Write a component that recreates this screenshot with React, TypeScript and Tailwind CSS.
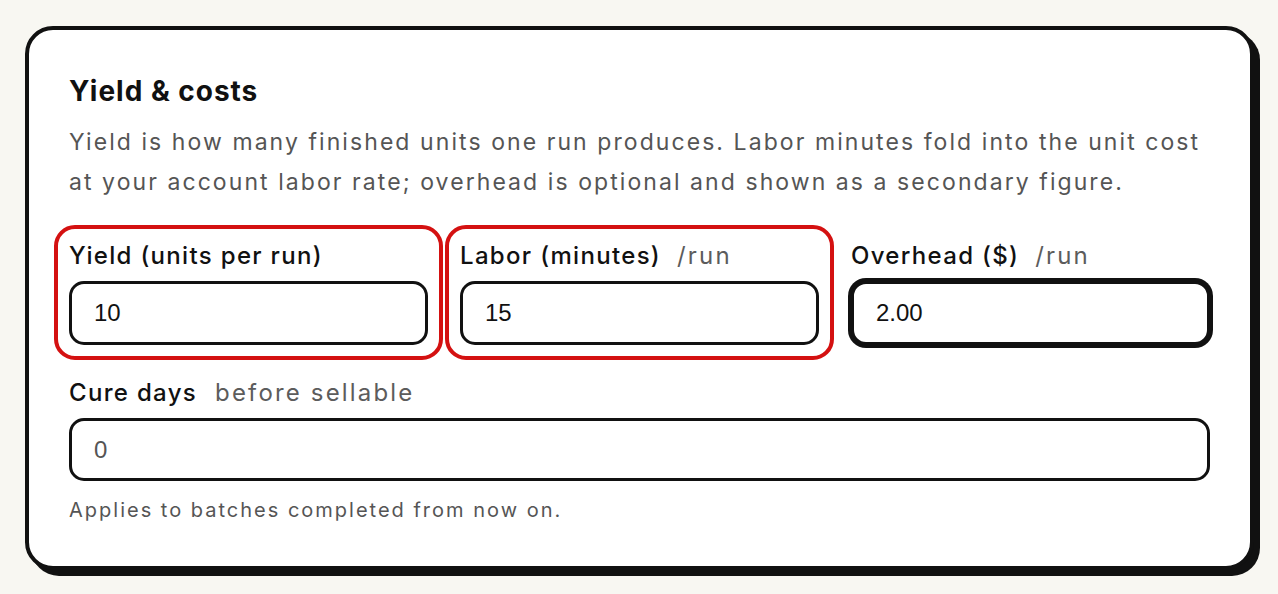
import React from "react";

const labelFont = { fontFamily: "Inter, 'Noto Sans', sans-serif" };

function Field({
  label,
  hint,
  value,
  flagged,
  focused,
}: {
  label: string;
  hint?: string;
  value: string;
  flagged?: boolean;
  focused?: boolean;
}) {
  return (
    <div
      className={
        "flex flex-col gap-[10px] " +
        (flagged ? "rounded-[6px] outline-[4px] outline-solid outline-[#d41111] outline-offset-[11px]" : "")
      }
    >
      <div className="flex items-baseline gap-[16px] text-[24px] leading-[31px] tracking-[0.055em]">
        <span className="font-medium text-[#111]">{label}</span>
        {hint && <span className="text-[#5c5c5c] tracking-[0.09em]">{hint}</span>}
      </div>
      <div
        className={
          "flex h-[64px] items-center rounded-[15px] border-[3px] border-[#111] bg-white px-[22px] text-[24px] text-[#111] " +
          (focused ? "ring-[3px] ring-[#111]" : "")
        }
        style={{ fontFamily: "'Liberation Sans', Arial, sans-serif" }}
      >
        {value}
      </div>
    </div>
  );
}

export default function App() {
  return (
    <div className="min-h-[594px] bg-[#f8f7f2] pt-[26px]" style={labelFont}>
      <div className="ml-[25px] w-[1229px] rounded-[28px] border-[4px] border-[#111] bg-white px-[40px] pt-[44px] pb-[42px] shadow-[6px_6px_0_#111]">
        <h2 className="text-[28px] font-bold leading-[34px] tracking-[0.035em] text-[#111]">Yield &amp; costs</h2>
        <p className="mt-[14px] text-[23px] leading-[40px] tracking-[0.09em] text-[#555]">
          Yield is how many finished units one run produces. Labor minutes fold into the unit cost at your account
          labor rate; overhead is optional and shown as a secondary figure.
        </p>
        <div className="mt-[38px] grid grid-cols-3 gap-[32px]">
          <Field label="Yield (units per run)" value="10" flagged />
          <Field label="Labor (minutes)" hint="/run" value="15" flagged />
          <Field label="Overhead ($)" hint="/run" value="2.00" focused />
        </div>
        <div className="mt-[32px] flex flex-col gap-[10px]">
          <div className="flex items-baseline gap-[18px] text-[24px] leading-[31px] tracking-[0.055em]">
            <span className="font-medium text-[#111]">Cure days</span>
            <span className="text-[#5c5c5c] tracking-[0.09em]">before sellable</span>
          </div>
          <div
            className="flex h-[63px] items-center rounded-[15px] border-[3px] border-[#111] bg-white px-[22px] text-[24px] text-[#555]"
            style={{ fontFamily: "'Liberation Sans', Arial, sans-serif" }}
          >
            0
          </div>
          <p className="mt-[5px] text-[20px] leading-[28px] tracking-[0.1em] text-[#555]">
            Applies to batches completed from now on.
          </p>
        </div>
      </div>
    </div>
  );
}
